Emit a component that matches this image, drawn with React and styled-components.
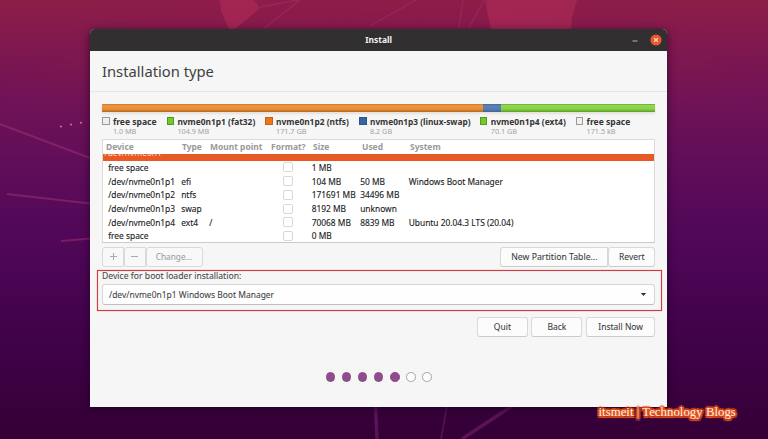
import React from "react";
import styled, { createGlobalStyle, css } from "styled-components";

const GlobalStyle = createGlobalStyle`
  * { box-sizing: border-box; }
  body { margin: 0; overflow: hidden; }
  button { font: inherit; margin: 0; padding: 0; }
`;

const Desktop = styled.div`
  position: relative;
  width: 768px;
  height: 439px;
  overflow: hidden;
  display: flex;
  padding: 28.5px 0 0 90px;
  background:
    radial-gradient(ellipse 560px 130px at 50% 0, rgba(145, 25, 72, 0.35), transparent),
    linear-gradient(#8c1e48 0, #7f194e 40px, #701356 100px, #610e59 160px, #520858 230px, #46044f 300px, #3d0144 365px, #340035 439px);
  font-family: "Noto Sans", "Open Sans", sans-serif;
  font-size: 8.45px;
  color: #353535;
`;

const Wallpaper = styled.svg`
  position: absolute;
  inset: 0;
`;

const Window = styled.main`
  position: relative;
  width: 577.4px;
  height: 378px;
  display: flex;
  flex-direction: column;
  background: #f6f6f6;
  border-radius: 5px 5px 0 0;
  box-shadow: 0 2px 8px rgba(20, 0, 25, 0.65);
`;

const TitleBar = styled.header`
  height: 22.5px;
  flex: none;
  display: grid;
  grid-template-columns: 1fr auto 1fr;
  align-items: center;
  background: #312f30;
  border-radius: 5px 5px 0 0;
  color: #f2f2f2;
  font-weight: 700;
  padding-right: 5px;
`;

const TitleText = styled.span`
  grid-column: 2;
  padding-left: 5px;
`;

const WindowControls = styled.div`
  display: flex;
  justify-content: flex-end;
  align-items: center;
  gap: 12px;
`;

const Heading = styled.h1`
  margin: 0;
  height: 40.5px;
  flex: none;
  padding: 0 12px;
  border-bottom: 1px solid #e6e6e6;
  font-size: 14.75px;
  line-height: 40px;
  font-weight: 400;
  color: #3f3f3f;
`;

const Content = styled.div`
  padding: 12px 12px 0;
  display: flex;
  flex-direction: column;
`;

const DiskBar = styled.div`
  display: flex;
  height: 8.5px;
  width: 553.4px;
  box-shadow: 0 2px 2px rgba(150, 110, 80, 0.16);
`;

const segmentFill = {
  ntfs: "linear-gradient(#c57329 0, #ee943c 1.5px, #ea8e36 5px, #a8621d 8.5px)",
  swap: "linear-gradient(#45689a 0, #5c81b6 2px, #587db1 5px, #3d608f 8.5px)",
  ext4: "linear-gradient(#67a02f 0, #90d850 1.5px, #86d246 5px, #5a9226 8.5px)",
};

const Segment = styled.div`
  width: ${(p) => p.$width}px;
  background: ${(p) => segmentFill[p.$kind]};
`;

const Legend = styled.div`
  display: flex;
  height: 27px;
  padding-top: 4.5px;
  margin-bottom: -0.5px;
`;

const LegendItem = styled.div`
  width: ${(p) => p.$width}px;
  flex: none;
  display: grid;
  grid-template-columns: 7.5px auto;
  column-gap: 3.4px;
  grid-template-rows: 10.5px 8px;
  align-items: center;
  white-space: nowrap;
`;

const Swatch = styled.i`
  width: 7.5px;
  height: 8px;
  margin-top: -1px;
  border: 1px solid ${(p) => p.$edge};
  background: ${(p) => p.$color};
`;

const LegendName = styled.strong`
  font-size: ${(p) => p.$size || 8.4}px;
  line-height: 10.5px;
`;

const LegendSize = styled.small`
  grid-column: 2;
  font-size: 7.25px;
  line-height: 8px;
  color: #a3a3a3;
`;

const TableFrame = styled.section`
  width: 553.4px;
  height: 104.5px;
  flex: none;
  overflow: hidden;
  border: 1px solid #dadada;
  border-bottom: 1.5px solid #cbcbcb;
  background: #fff;
`;

const columns = css`
  display: grid;
  align-items: center;
  white-space: nowrap;
`;

const TableHead = styled.div`
  ${columns}
  grid-template-columns: 76px 28px 61px 42px 49px 48px 1fr;
  height: 14.5px;
  padding-left: 3px;
  color: #999;
  font-weight: 700;
`;

const SelectedRow = styled.div`
  height: 6.5px;
  overflow: hidden;
  background: #e75a26;
  color: #fbd9c9;
  padding-left: 1.5px;
  line-height: 12px;

  span {
    display: block;
    margin-top: -7px;
  }
`;

const TableRow = styled.div`
  ${columns}
  grid-template-columns: 73px 28px 73.5px 29px 48.5px 48.5px 1fr;
  height: 13.72px;
  padding-left: 5.2px;
  color: #222;
  font-size: 8.4px;
  -webkit-text-stroke: 0.12px #222;
`;

const Checkbox = styled.i`
  width: 10px;
  height: 10px;
  border: 1px solid #d8d8d8;
  border-radius: 2px;
  background: #fff;
`;

const Toolbar = styled.div`
  display: flex;
  justify-content: space-between;
  margin-top: 3.5px;
  height: 20px;
`;

const ButtonGroup = styled.div`
  display: flex;
`;

const Button = styled.button`
  width: ${(p) => p.$width}px;
  height: 20.5px;
  display: flex;
  align-items: center;
  justify-content: center;
  border: 1px solid #d9d9d9;
  border-bottom-color: #cacaca;
  border-radius: 3px;
  background: #fcfcfc;
  color: #3c3c3c;
  font-size: ${(p) => p.$size || 8.5}px;
  -webkit-text-stroke: 0.08px currentColor;
  white-space: nowrap;

  &:disabled {
    color: #a0a0a0;
    background: #f8f8f8;
    border-color: #d9d9d9;
  }

  ${ButtonGroup} & + & { margin-left: -1px; border-top-left-radius: 0; border-bottom-left-radius: 0; }
  ${ButtonGroup} &:not(:last-child) { border-top-right-radius: 0; border-bottom-right-radius: 0; }
`;

const BootLoader = styled.section`
  margin: 3px -7px 0 -5px;
  height: 41.5px;
  padding: 0 6px 0 4px;
  border: 1px solid #d03c42;
  box-shadow: 0 0 1px rgba(208, 60, 66, 0.6), inset 0 0 1px rgba(208, 60, 66, 0.6);
`;

const FieldLabel = styled.label`
  display: block;
  height: 13.5px;
  line-height: 11.5px;
  font-size: 8.65px;
  color: #4a4a4a;
  -webkit-text-stroke: 0.08px currentColor;
`;

const Select = styled.div`
  width: 553.4px;
  height: 20.5px;
  display: flex;
  align-items: center;
  justify-content: space-between;
  padding: 0 7px 0 6px;
  border: 1px solid #d6d6d6;
  border-bottom: 1.5px solid #bebebe;
  border-radius: 3px;
  background: #fefefe;
  font-size: 8.47px;
  color: #444;
  -webkit-text-stroke: 0.08px currentColor;
`;

const Actions = styled.div`
  display: flex;
  justify-content: flex-end;
  gap: 3.5px;
  margin-top: 5.6px;
  width: 553.4px;
`;

const Pager = styled.div`
  display: flex;
  justify-content: center;
  gap: 6.65px;
  margin-top: 35.4px;
`;

const Dot = styled.i`
  width: 9.5px;
  height: 9.5px;
  border-radius: 50%;
  border: 1px solid ${(p) => (p.$done ? "#8b4b88" : "#a8a3a5")};
  background: ${(p) => (p.$done ? "#8f4d8c" : "#fcfcfc")};
`;

const Signature = styled.div`
  position: absolute;
  left: 598.5px;
  top: 403px;
  font: 12.85px/18px "Liberation Serif", serif;
  color: #fff3e8;
  white-space: nowrap;
  text-shadow:
    0 0 2px #e8541b, 2px 0 1px #e8541b, -2px 0 1px #e8541b, 0 2px 1px #e8541b,
    0 -2px 1px #e8541b, 1.5px 1.5px 1px #e8541b, -1.5px -1.5px 1px #e8541b,
    1.5px -1.5px 1px #e8541b, -1.5px 1.5px 1px #e8541b, 0 0 3px #e8541b;
`;

const legend = [
  ["free space", "1.0 MB", "#efefef", "#9a9a9a", 64.5, 8.55],
  ["nvme0n1p1 (fat32)", "104.9 MB", "#70cb24", "#549727", 98.6, 8.4],
  ["nvme0n1p2 (ntfs)", "171.7 GB", "#ec7714", "#b9622a", 94, 8.4],
  ["nvme0n1p3 (linux-swap)", "8.2 GB", "#3565a4", "#345483", 120.8, 8.3],
  ["nvme0n1p4 (ext4)", "70.1 GB", "#70cb24", "#549727", 95.8, 8.45],
  ["free space", "171.5 kB", "#efefef", "#9a9a9a", 70, 8.55],
];

const rows = [
  ["free space", "", "", "1 MB", "", ""],
  ["/dev/nvme0n1p1", "efi", "", "104 MB", "50 MB", "Windows Boot Manager"],
  ["/dev/nvme0n1p2", "ntfs", "", "171691 MB", "34496 MB", ""],
  ["/dev/nvme0n1p3", "swap", "", "8192 MB", "unknown", ""],
  ["/dev/nvme0n1p4", "ext4", "/", "70068 MB", "8839 MB", "Ubuntu 20.04.3 LTS (20.04)"],
  ["free space", "", "", "0 MB", "", ""],
];

export default function App() {
  return (
    <>
      <GlobalStyle />
      <Desktop>
        <Wallpaper width="768" height="439" viewBox="0 0 768 439" fill="none">
          <path d="M220 0h34l6 8-15 13-10 8h-6l-8-18zM485 0h92l-5 18-1 12h-80z" fill="#b02b59" fillOpacity=".6" />
          <g stroke="#a62f72" strokeOpacity=".5">
            <path d="M260 7l38-7M264 28l36-28M370 26l46-26M459 28l4-28M469 28l15-28" strokeWidth="1.3" />
            <path d="M0 124l90 34M7 194l83 9.5M61 241l30-2.5" strokeWidth="2.2" />
            <path d="M375.500 406l1.500 33M462 439l50-33" stroke="#7d2379" strokeWidth="3.500" />
            <path d="M447 406l-6 33" stroke="#7d2379" strokeWidth="1.500" />
          </g>
          <g fill="#c57abb">
            <circle cx="61" cy="126.500" r="1" />
            <circle cx="71" cy="124.500" r="1" />
            <circle cx="81" cy="122.700" r="1" />
          </g>
        </Wallpaper>

        <Window>
          <TitleBar>
            <TitleText>Install</TitleText>
            <WindowControls>
              <svg width="6" height="12" viewBox="0 0 6 12"><path d="M.5 7h5" stroke="#aaa" strokeWidth="1.100" /></svg>
              <svg width="12" height="12" viewBox="0 0 12 12">
                <circle cx="6" cy="6" r="5.600" fill="#e65b2b" />
                <path d="M4.100 4.100l3.800 3.800M7.900 4.100L4.100 7.900" stroke="#fbe4da" strokeWidth="1.100" />
              </svg>
            </WindowControls>
          </TitleBar>
          <Heading>Installation type</Heading>

          <Content>
            <DiskBar>
              <Segment $kind="ntfs" $width={380.5} />
              <Segment $kind="swap" $width={18} />
              <Segment $kind="ext4" $width={154.9} />
            </DiskBar>
            <Legend>
              {legend.map(([name, size, color, edge, width, fontSize], i) => (
                <LegendItem key={i} $width={width}>
                  <Swatch $color={color} $edge={edge} />
                  <LegendName $size={fontSize}>{name}</LegendName>
                  <LegendSize>{size}</LegendSize>
                </LegendItem>
              ))}
            </Legend>

            <TableFrame>
              <TableHead>
                {["Device", "Type", "Mount point", "Format?", "Size", "Used", "System"].map((title) => (
                  <span key={title}>{title}</span>
                ))}
              </TableHead>
              <SelectedRow><span>/dev/nvme0n1</span></SelectedRow>
              {rows.map(([device, type, mount, size, used, system], i) => (
                <TableRow key={i}>
                  <span>{device}</span>
                  <span>{type}</span>
                  <span>{mount}</span>
                  <Checkbox />
                  <span>{size}</span>
                  <span>{used}</span>
                  <span>{system}</span>
                </TableRow>
              ))}
            </TableFrame>

            <Toolbar>
              <ButtonGroup>
                <Button disabled $width={22}>
                  <svg width="9" height="9" viewBox="0 0 9 9"><path d="M1 4.500h7M4.500 1v7" stroke="#aaa" /></svg>
                </Button>
                <Button disabled $width={21.5}>
                  <svg width="9" height="9" viewBox="0 0 9 9"><path d="M1 4.500h7" stroke="#aaa" /></svg>
                </Button>
                <Button disabled $width={57} $size={8.3}>Change...</Button>
              </ButtonGroup>
              <ButtonGroup>
                <Button $width={108} $size={8.7}>New Partition Table...</Button>
                <Button $width={47}>Revert</Button>
              </ButtonGroup>
            </Toolbar>

            <BootLoader>
              <FieldLabel>Device for boot loader installation:</FieldLabel>
              <Select>
                <span>/dev/nvme0n1p1 Windows Boot Manager</span>
                <svg width="7" height="5" viewBox="0 0 7 5"><path d="M.8 1h5.400L3.500 4z" fill="#333" /></svg>
              </Select>
            </BootLoader>

            <Actions>
              <Button $width={51}>Quit</Button>
              <Button $width={51}>Back</Button>
              <Button $width={69.5}>Install Now</Button>
            </Actions>

            <Pager>
              {[1, 2, 3, 4, 5, 6, 7].map((step) => (
                <Dot key={step} $done={step <= 5} />
              ))}
            </Pager>
          </Content>
        </Window>

        <Signature>itsmeit | Technology Blogs</Signature>
      </Desktop>
    </>
  );
}
